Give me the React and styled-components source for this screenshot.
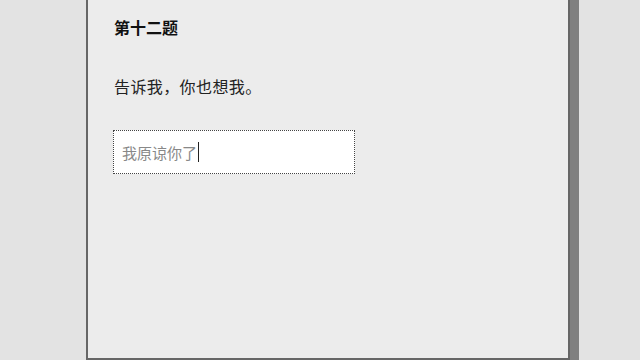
import styled, { createGlobalStyle } from 'styled-components'

const GlobalStyle = createGlobalStyle`
    html, body {
        margin:0;
        padding:0;
        background:#e3e3e3;
        overflow:hidden;
    }
`

const Page = styled.div`
    width:640px;
    height:360px;
    display:flex;
    padding-left:86px;
    box-sizing:border-box;
`

const Sheet = styled.div`
    width:484px;
    height:360px;
    box-sizing:border-box;
    background:#ececec;
    border:2px solid #666;
    border-top:none;
    box-shadow:9px 0 0 #808080;
    padding:19px 0 0 26px;
    font-family:"Liberation Sans","Noto Sans CJK SC",sans-serif;
    color:#111;
`

const Title = styled.h3`
    margin:0;
    font-size:16px;
    line-height:20px;
    font-weight:700;
`

const Question = styled.p`
    margin:38px 0 0;
    font-size:16px;
    line-height:22px;
    color:#222;
    letter-spacing:0.4px;
`

const Field = styled.div`
    margin-top:31px;
    margin-left:-1px;
    width:242px;
    height:44px;
    box-sizing:border-box;
    background:#fff;
    border:1px dotted #444;
    display:flex;
    align-items:center;
    padding-left:8px;
    font-size:15px;
    color:#888;
`

const Caret = styled.span`
    display:inline-block;
    width:1px;
    height:20px;
    margin-left:1px;
    background:#222;
`

const App = () => {
  return (
    <Page>
        <GlobalStyle/>
        <Sheet>
            <Title>第十二题</Title>
            <Question>告诉我，你也想我。</Question>
            <Field>
                我原谅你了<Caret/>
            </Field>
        </Sheet>
    </Page>
  )
}

export default App
